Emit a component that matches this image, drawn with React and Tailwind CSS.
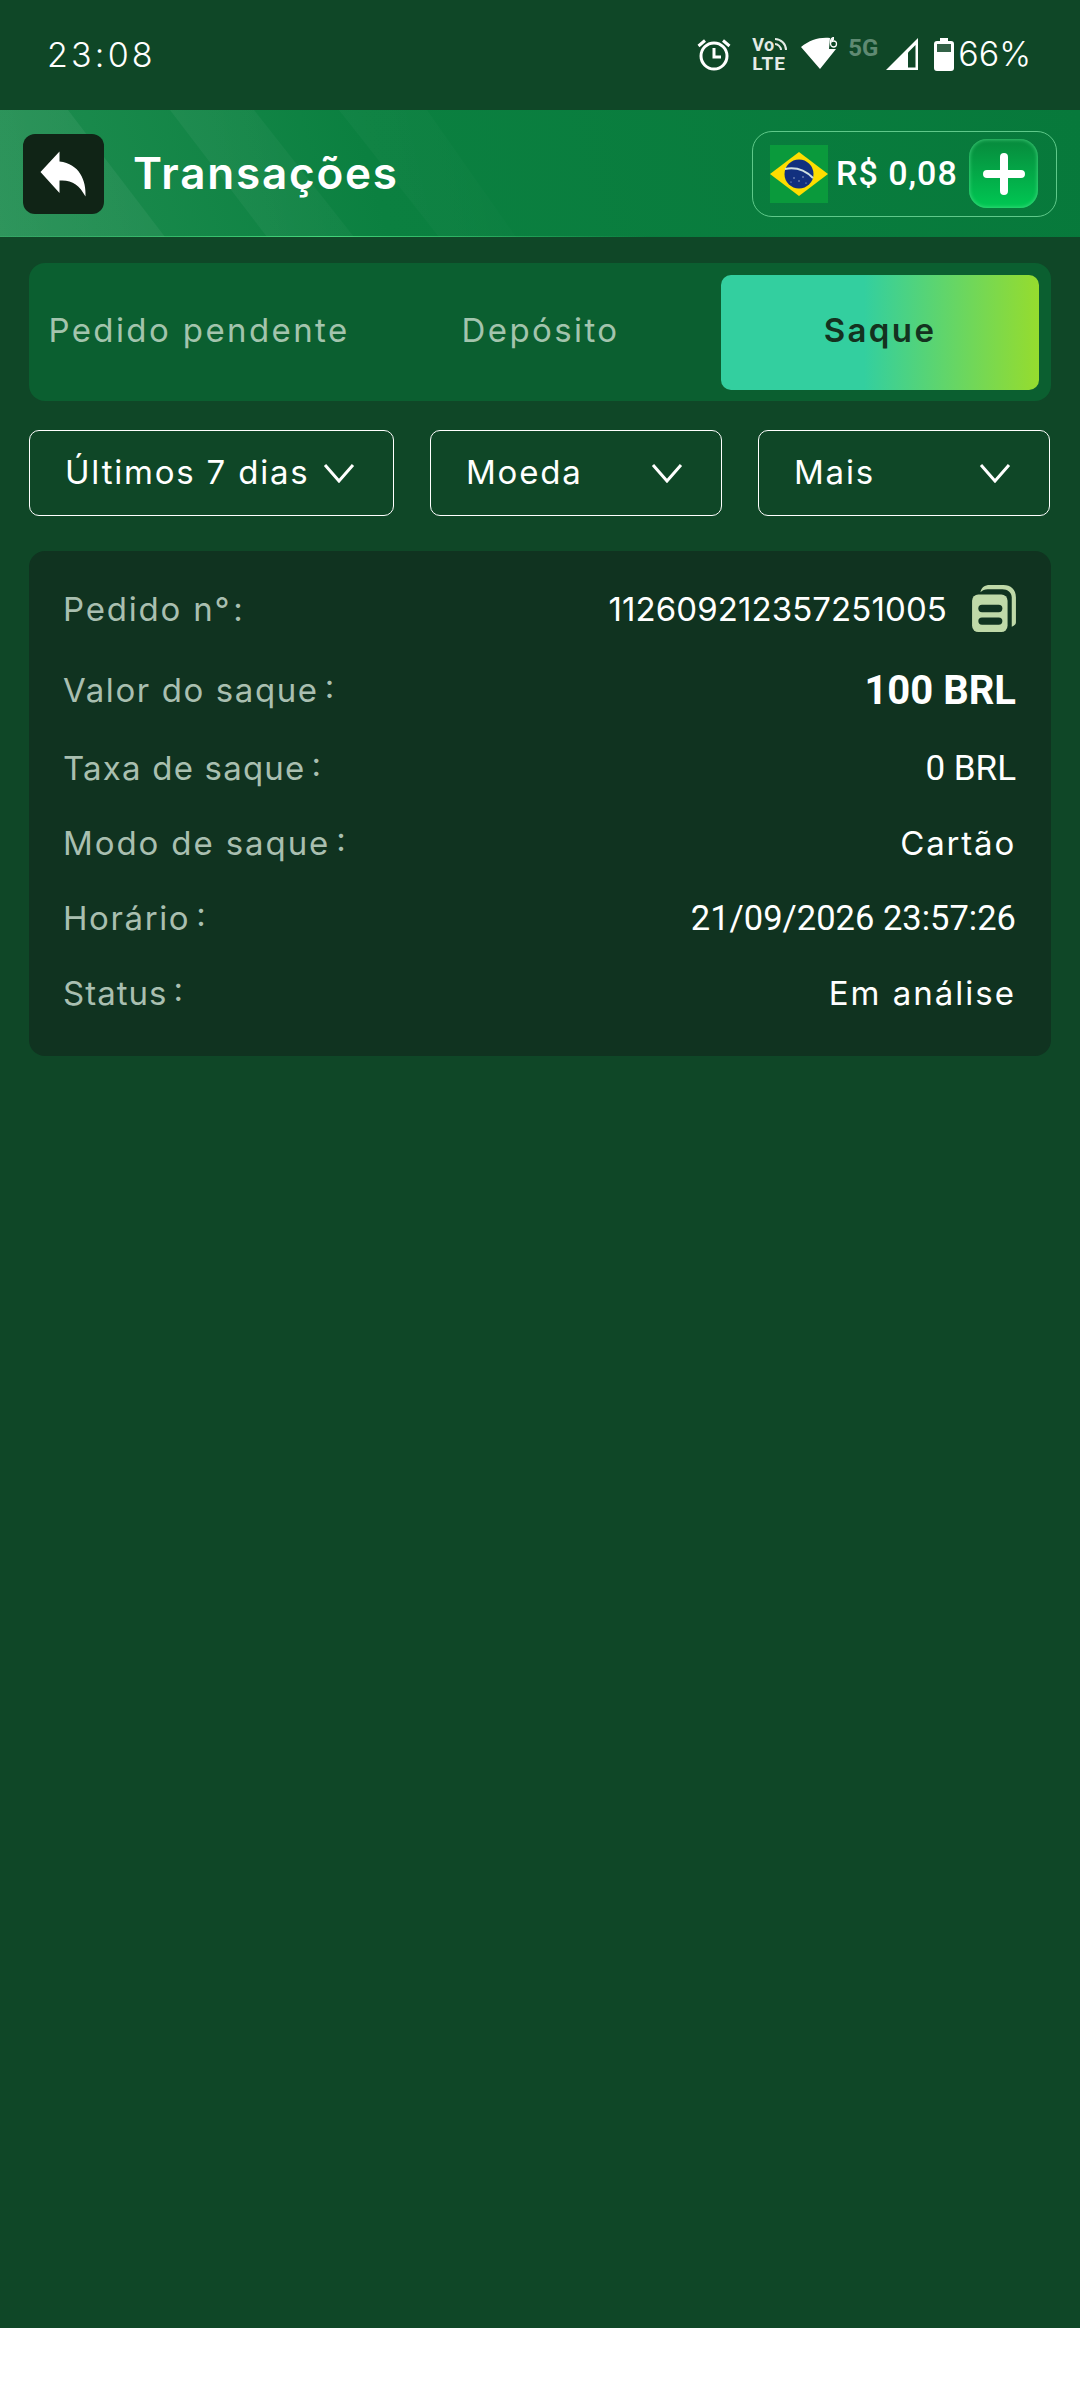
function Chevron() {
  return (
    <svg width="32" height="20" viewBox="0 0 32 20" fill="none" className="shrink-0">
      <path d="M2 2l14 16L30 2" stroke="white" strokeWidth="3" />
    </svg>
  )
}

function Alarm() {
  return (
    <svg width="34" height="34" viewBox="0 0 34 34" fill="none" stroke="white" strokeWidth="3">
      <circle cx="17" cy="19" r="13" />
      <path d="M17 11v9h7" />
      <path d="M1.5 9L8 3.5M32.5 9L26 3.5" />
    </svg>
  )
}

function Wifi() {
  return (
    <svg width="38" height="34" viewBox="0 0 38 34" fill="white">
      <path d="M0 10C9 3 18 0 29 1L28 12H35L19 32Z" />
      <path d="M33 0.5c-2.500 0-3.500 2-3.500 5s1 4.500 3 4.500 3-1 3-3-1-3-3-3c-1 0-1.500 .5-1.500 .5 0-1.500 .7-2.500 2-2.500" fill="none" stroke="white" strokeWidth="1.300" />
    </svg>
  )
}

function Signal() {
  return (
    <svg width="32" height="32" viewBox="0 0 32 32">
      <path d="M0 32L32 0V32Z" fill="white" />
      <path d="M22 14.500L29.500 7V29.500H22Z" fill="#0f4727" />
    </svg>
  )
}

function Battery() {
  return (
    <svg width="20" height="33" viewBox="0 0 20 33" fill="white">
      <path d="M6 0h8v3h3a3 3 0 0 1 3 3v24a3 3 0 0 1-3 3H3a3 3 0 0 1-3-3V6a3 3 0 0 1 3-3h3Z" />
      <rect x="3" y="6" width="14" height="8" fill="#0f4727" opacity="0.85" />
    </svg>
  )
}

function BackArrow() {
  return (
    <svg width="47" height="46" viewBox="0 0 46 46" fill="white">
      <path d="M19 0.500L0 21 19 42V29.500C31 28.500 39 34 45 45.500 46 30 39 12.500 19 10.500Z" />
    </svg>
  )
}

function Flag() {
  return (
    <svg width="58" height="58" viewBox="0 0 58 58" className="shrink-0">
      <rect width="58" height="58" fill="#0a9a3c" />
      <path d="M0 29L29 7l29 22-29 22Z" fill="#fedd00" />
      <circle cx="29" cy="29" r="14.500" fill="#12307f" />
      <path d="M15 24c10-2 20 1 28 9" fill="none" stroke="#cfe0e0" strokeWidth="2" />
      <g fill="#b9c8de">
        <circle cx="24" cy="33" r=".7" /><circle cx="29" cy="36" r=".7" /><circle cx="33" cy="32" r=".7" /><circle cx="21" cy="37" r=".6" /><circle cx="36" cy="38" r=".6" />
      </g>
    </svg>
  )
}

function CopyIcon() {
  return (
    <svg width="44" height="47" viewBox="0 0 42 45" fill="#bfd9a8" className="shrink-0">
      <path d="M8 7C9 2 12 0 17 0H30C37 0 42 4 42 12V36C42 38 40 39 38 40V12C38 7 34 4 29 4H15C12 4 10 5 8 7Z" />
      <rect x="0" y="9" width="34" height="36" rx="6" />
      <rect x="6" y="19" width="23" height="7" rx="3.500" fill="#103320" />
      <rect x="6" y="31" width="23" height="7" rx="3.500" fill="#103320" />
    </svg>
  )
}

function HeaderStripes() {
  return (
    <svg className="absolute inset-0" width="1080" height="127" viewBox="0 0 1080 127">
      <defs>
        <linearGradient id="fade" gradientUnits="userSpaceOnUse" x1="0" y1="127" x2="560" y2="0">
          <stop offset="0" stopColor="#ffffff" stopOpacity="0.07" />
          <stop offset="1" stopColor="#ffffff" stopOpacity="0" />
        </linearGradient>
        <linearGradient id="edge" gradientUnits="userSpaceOnUse" x1="0" y1="0" x2="1080" y2="0">
          <stop offset="0" stopColor="#4ade80" stopOpacity="0.2" />
          <stop offset="0.3" stopColor="#4ade80" stopOpacity="0.9" />
          <stop offset="0.6" stopColor="#4ade80" stopOpacity="0" />
        </linearGradient>
      </defs>
      <path d="M0 0H68L165 127H0Z" fill="url(#fade)" />
      <path d="M170 0H254L354 127H267Z" fill="url(#fade)" />
      <path d="M339 0H427L516 127H439Z" fill="url(#fade)" />
      <rect x="0" y="126" width="1080" height="1" fill="url(#edge)" />
    </svg>
  )
}

const rows = [
  { label: 'Pedido n°', labelCls: 'tracking-[1.800px]', value: '112609212357251005', h: 'h-[80px]', cls: "font-['Inter',sans-serif] text-[33px] tracking-[0.1px]", copy: true, plainColon: true },
  { label: 'Valor do saque', labelCls: 'tracking-[1.600px]', value: '100 BRL', h: 'h-[82px]', cls: "font-['Roboto',sans-serif] text-[40px] font-bold" },
  { label: 'Taxa de saque', labelCls: 'tracking-[1.200px]', value: '0 BRL', h: 'h-[74px]', cls: "font-['Roboto',sans-serif] text-[35px]" },
  { label: 'Modo de saque', labelCls: 'tracking-[1.900px]', value: 'Cartão', h: 'h-[76px]', cls: "font-['Inter',sans-serif] text-[33px] tracking-[1.800px]" },
  { label: 'Horário', labelCls: 'tracking-[1.600px]', value: '21/09/2026 23:57:26', h: 'h-[74px]', cls: "font-['Roboto',sans-serif] text-[34.500px]" },
  { label: 'Status', labelCls: 'tracking-[1px]', value: 'Em análise', h: 'h-[76px]', cls: "font-['Inter',sans-serif] text-[33px] tracking-[2px]" },
]

export default function App() {
  return (
    <div className="w-[1080px] h-[2388px] bg-white font-['Inter',sans-serif]">
      <div className="h-[2328px] bg-[#0f4727] flex flex-col">
        {/* status bar */}
        <div className="h-[110px] shrink-0 flex items-center justify-between pl-[47px] pr-[49px] pb-[2px] text-white">
          <span className="text-[34px] tracking-[3.200px] font-light">23:08</span>
          <div className="flex items-center">
            <Alarm />
            <div className="ml-[20px] w-[40px] h-[36px] relative font-['Roboto',sans-serif] font-bold leading-none text-[#e4ebe6]">
              <span className="absolute left-[1px] top-[0px] text-[18px] tracking-[0.5px]">Vo</span>
              <svg className="absolute right-[3px] top-[1px]" width="14" height="14" viewBox="0 0 14 14" fill="none" stroke="#e4ebe6" strokeWidth="2">
                <path d="M1 2c6 0 11 5 11 11M1 7c3 0 6 3 6 6" />
              </svg>
              <span className="absolute left-[1px] bottom-[-1px] text-[19px] tracking-[1px]">LTE</span>
            </div>
            <div className="ml-[10px]"><Wifi /></div>
            <span className="ml-[9px] w-[38px] self-start font-['Roboto',sans-serif] font-bold text-[24px] leading-none text-[#5f8a72]">5G</span>
            <Signal />
            <div className="ml-[16px]"><Battery /></div>
            <span className="ml-[4px] text-[34px] font-light leading-none">66%</span>
          </div>
        </div>

        {/* header */}
        <div className="relative h-[127px] shrink-0 bg-[linear-gradient(75deg,#1f8d50_0%,#0b8040_35%,#07793b_100%)]">
          <HeaderStripes />
          <div className="relative h-full flex items-center justify-between pl-[23px] pr-[23px]">
            <div className="flex items-center">
              <div className="w-[81px] h-[80px] rounded-[12px] bg-[#102416] flex items-center justify-center">
                <BackArrow />
              </div>
              <h1 className="ml-[29px] pb-[2px] text-[44px] font-semibold text-white tracking-[1.800px]">Transações</h1>
            </div>
            <div className="w-[305px] h-[86px] rounded-[20px] border border-[#5fc98a] flex items-center pl-[17px]">
              <Flag />
              <span className="ml-[8px] w-[133px] font-['Roboto',sans-serif] font-medium text-[34px] text-white tracking-[1px]">R$ 0,08</span>
              <div className="w-[69px] h-[69px] rounded-[18px] bg-[linear-gradient(180deg,#07893c,#00c853)] shadow-[inset_0_0_4px_#4fe08a] flex items-center justify-center">
                <svg width="42" height="42" viewBox="0 0 42 42">
                  <path d="M21 4v34M4 21h34" stroke="white" strokeWidth="8" strokeLinecap="round" />
                </svg>
              </div>
            </div>
          </div>
        </div>

        {/* tabs */}
        <div className="mt-[26px] mx-[29px] h-[138px] rounded-[16px] bg-[#0b5f30] px-[12px] flex items-center justify-between text-[33px] tracking-[2.400px] text-center">
          <div className="w-[316px] pb-[3px] text-[#a3c4ad] whitespace-nowrap">Pedido pendente</div>
          <div className="w-[316px] pb-[3px] pl-[3px] text-[#a3c4ad]">Depósito</div>
          <div className="w-[318px] h-[115px] pb-[3px] rounded-[10px] bg-[linear-gradient(90deg,#33cf9f_0%,#33cf9f_45%,#96dc2e_100%)] flex items-center justify-center font-semibold text-[#14321f]">Saque</div>
        </div>

        {/* filters */}
        <div className="mt-[29px] mx-[29px] flex gap-[36px] text-[33px] tracking-[1.800px] text-white">
          <div className="w-[365px] h-[86px] rounded-[10px] border border-white flex items-center justify-between pl-[35px] pr-[38px]">
            <span>Últimos 7 dias</span>
            <Chevron />
          </div>
          <div className="w-[292px] h-[86px] rounded-[10px] border border-white flex items-center justify-between pl-[35px] pr-[38px]">
            <span>Moeda</span>
            <Chevron />
          </div>
          <div className="w-[292px] h-[86px] rounded-[10px] border border-white flex items-center justify-between pl-[35px] pr-[38px]">
            <span>Mais</span>
            <Chevron />
          </div>
        </div>

        {/* order card */}
        <div className="mt-[35px] mx-[29px] rounded-[16px] bg-[#103320] pl-[34px] pr-[35px] pt-[19px] pb-[24px]">
          {rows.map(r => (
            <div key={r.label} className={`${r.h} flex items-center justify-between`}>
              <span className={`${r.labelCls} text-[33px] text-[#a9bfb0]`}>
                {r.label}
                {r.plainColon ? <span className="ml-[2px]">:</span> : <span className="inline-block ml-[6px] -translate-y-[4px]">:</span>}
              </span>
              <div className="flex items-center">
                <span className={`${r.cls} text-white`}>{r.value}</span>
                {r.copy && <div className="ml-[25px] -mt-[4px]"><CopyIcon /></div>}
              </div>
            </div>
          ))}
        </div>
      </div>
    </div>
  )
}
